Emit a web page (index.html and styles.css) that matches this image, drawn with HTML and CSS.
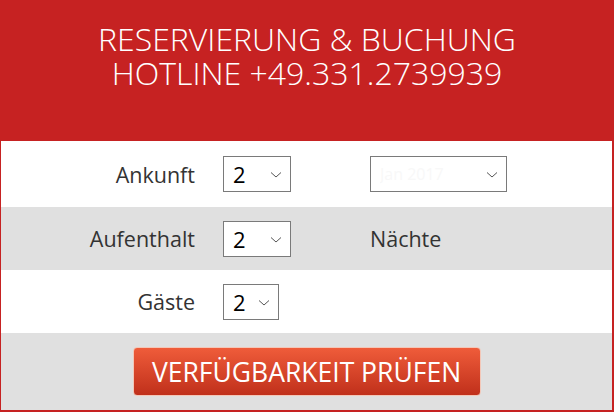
FILE: index.html
```html
<!DOCTYPE html>
<html lang="de">
<head>
  <meta charset="UTF-8">
  <meta name="viewport" content="width=device-width, initial-scale=1.0">
  <title>Reservierung</title>
  <link rel="stylesheet" href="styles.css">
</head>
<body>
  <div class="booking">
    <div class="head">
      <p>RESERVIERUNG &amp; BUCHUNG</p>
      <p>HOTLINE +49.331.2739939</p>
    </div>
    <div class="row">
      <label class="lbl">Ankunft</label>
      <div class="sel">
        <select><option>2</option></select>
        <svg viewBox="0 0 12 6" width="12" height="6"><path d="M1 0.5 L6 5 L11 0.5" fill="none" stroke="#555" stroke-width="1"/></svg>
      </div>
      <div class="sel wide">
        <select class="blur"><option>Jan 2017</option></select>
        <svg viewBox="0 0 12 6" width="12" height="6"><path d="M1 0.5 L6 5 L11 0.5" fill="none" stroke="#555" stroke-width="1"/></svg>
      </div>
    </div>
    <div class="row grey">
      <label class="lbl">Aufenthalt</label>
      <div class="sel">
        <select><option>2</option></select>
        <svg viewBox="0 0 12 6" width="12" height="6"><path d="M1 0.5 L6 5 L11 0.5" fill="none" stroke="#555" stroke-width="1"/></svg>
      </div>
      <span class="extra">Nächte</span>
    </div>
    <div class="row">
      <label class="lbl">Gäste</label>
      <div class="sel small">
        <select><option>2</option></select>
        <svg viewBox="0 0 12 6" width="12" height="6"><path d="M1 0.5 L6 5 L11 0.5" fill="none" stroke="#555" stroke-width="1"/></svg>
      </div>
    </div>
    <div class="row grey last">
      <button type="button" class="btn">VERFÜGBARKEIT PRÜFEN</button>
    </div>
  </div>
</body>
</html>
```

FILE: styles.css
```css
* {
  box-sizing: border-box;
}
body {
  margin: 0;
  font-family: "Open Sans", "Liberation Sans", sans-serif;
  background: #fff;
}
.booking {
  width: 614px;
  height: 412px;
  border-left: 1px solid #c62222;
  border-right: 2px solid #c62222;
  border-bottom: 2px solid #c62222;
  display: flex;
  flex-direction: column;
}
.head {
  background-color: #c62222;
  height: 141px;
  margin-left: -1px;
  margin-right: -2px;
  display: flex;
  flex-direction: column;
  align-items: center;
  padding-top: 22px;
}
.head p {
  margin: 0;
  color: #fff;
  font-size: 32px;
  font-weight: 300;
  line-height: 34px;
  text-align: center;
}
.row {
  display: flex;
  align-items: center;
  height: 63px;
}
.row:nth-child(2) {
  height: 66px;
}
.grey {
  background-color: #e0e0e0;
}
.row.last {
  flex: 1;
  justify-content: center;
}
.lbl {
  width: 194px;
  text-align: right;
  font-size: 21.5px;
  color: #333;
}
.sel {
  position: relative;
  margin-left: 28px;
  width: 68px;
  height: 36px;
}
.sel.small {
  width: 56px;
}
.sel.wide {
  width: 137px;
  margin-left: 79px;
}
.sel select {
  -webkit-appearance: none;
  appearance: none;
  width: 100%;
  height: 100%;
  border: 1px solid #7a7a7a;
  border-radius: 0;
  background: #fff;
  font-family: "Open Sans", "Liberation Sans", sans-serif;
  font-size: 22px;
  color: #000;
  padding: 0 0 0 9px;
}
.sel select.blur {
  color: #f8f8f8;
  font-size: 16px;
}
.sel svg {
  position: absolute;
  right: 9px;
  top: 16px;
}
.extra {
  margin-left: 79px;
  font-size: 21.5px;
  color: #333;
}
.btn {
  width: 348px;
  height: 49px;
  border: 1px solid #f3c7b8;
  border-radius: 4px;
  background: linear-gradient(#ef5c3a, #c0301b);
  color: #fff;
  font-family: "Open Sans", "Liberation Sans", sans-serif;
  font-size: 26.5px;
  padding: 0;
}
```
